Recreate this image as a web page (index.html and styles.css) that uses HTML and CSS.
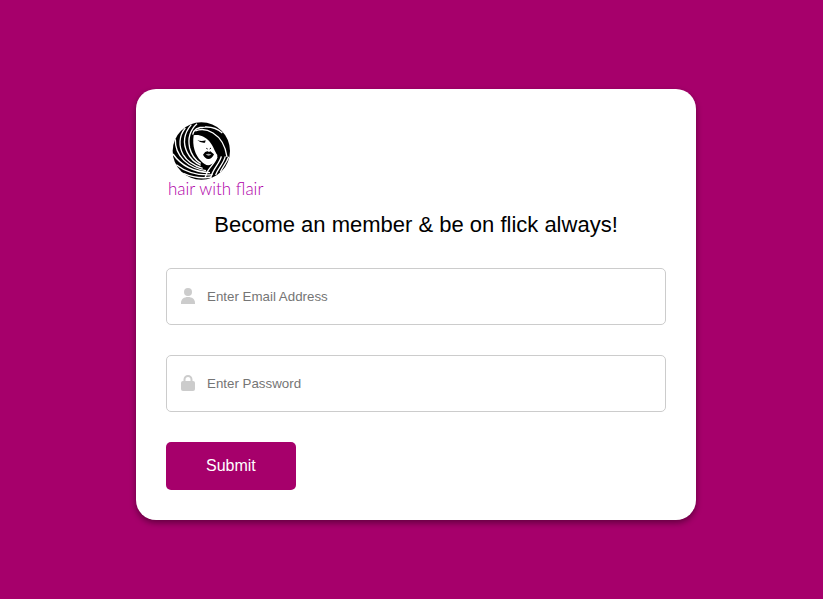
FILE: index.html
```html
<!DOCTYPE html>
<html lang="en">
<head>
<meta charset="utf-8">
<meta name="viewport" content="width=device-width, initial-scale=1">
<title>Hair with Flair</title>
<link rel="stylesheet" href="styles.css">
</head>
<body>
<main class="card">
  <div class="logo">
    <svg class="logo-mark" viewBox="0 0 174 174" aria-hidden="true">
      <circle cx="88" cy="87" r="86" fill="#000"/>
      <path class="face" d="M65 40C80 36 101 44 112 58C125 74 127 87 136 99C135 113 127 123 118 127C107 134 97 127 87 117C70 100 60 73 65 40Z"/>
      <g class="strands">
        <path d="M58 8C36 34 32 64 46 92C54 108 66 121 86 130"/>
        <path d="M75 5C54 24 47 50 53 78C58 98 68 113 86 124"/>
        <path d="M40 18C20 42 20 73 33 97C45 117 65 131 92 139"/>
        <path d="M10 52C8 103 50 138 102 146"/>
        <path d="M3 96C28 132 66 150 114 152"/>
        <path d="M13 128C45 153 82 161 122 158"/>
        <path d="M34 154C61 166 91 170 119 165"/>
        <path d="M62 38C65 22 78 15 99 15C120 14 138 21 151 33"/>
        <path d="M70 27C88 19 107 23 123 33C146 47 160 69 165 105"/>
        <path d="M135 104C131 120 116 133 108 146C104 154 101 161 99 168"/>
        <path d="M148 103C143 124 124 139 116 166"/>
        <path d="M160 103C154 126 138 138 131 159"/>
        <path d="M170 104C163 125 150 136 145 151"/>
      </g>
      <path d="M76 54Q88 60 101 55L99 62Q86 64 76 54Z"/>
      <path d="M103 79L107 81M113 81L117 78" fill="none" stroke="#000" stroke-width="3"/>
      <path d="M93 98Q100 87 107 88L111 90L115 88L126 97Q120 111 109 111Q99 110 93 98Z"/>
      <path d="M101 97Q110 93 118 97Q110 105 101 97Z" fill="#aaa"/>
    </svg>
    <span class="logo-name">hair with flair</span>
  </div>
  <h1 class="title">Become an member &amp; be on flick always!</h1>
  <form class="form">
    <div class="field">
      <label class="field-icon" for="email" aria-label="Email address">
        <svg viewBox="0 0 16 18" aria-hidden="true"><circle cx="8" cy="4" r="4"/><path d="M1 16v-1c0-4 3-6 7-6s7 2 7 6v1Z"/></svg>
      </label>
      <input id="email" type="email" placeholder="Enter Email Address">
    </div>
    <div class="field">
      <label class="field-icon" for="password" aria-label="Password">
        <svg viewBox="0 0 16 18" aria-hidden="true"><path d="M4.5 7V4.5a3.5 3.5 0 0 1 7 0V7" fill="none" stroke="#ccc" stroke-width="2"/><rect x="1" y="6" width="14" height="10" rx="2"/></svg>
      </label>
      <input id="password" type="password" placeholder="Enter Password">
    </div>
    <button class="submit" type="submit">Submit</button>
  </form>
</main>
</body>
</html>
```
FILE: styles.css
```css
* {
  box-sizing: border-box;
}

body {
  margin: 0;
  padding: 10px 0 0 9px;
  min-height: 100vh;
  display: flex;
  align-items: center;
  justify-content: center;
  background: #a6006b;
  font-family: "Liberation Sans", Arial, sans-serif;
}

.card {
  width: 100%;
  max-width: 560px;
  padding: 30px;
  border-radius: 20px;
  background: #fff;
  box-shadow: 0 3px 6px rgba(0, 0, 0, 0.4);
}

.logo {
  display: flex;
  flex-direction: column;
  align-items: flex-start;
  padding: 3px 0 0 2px;
}

.logo-mark {
  display: block;
  width: 58px;
  height: 58px;
  margin-left: 4px;
}

.face {
  fill: #fff;
}

.strands {
  fill: none;
  stroke: #fff;
  stroke-width: 4;
}

.logo-name {
  color: #b000a8;
  font: 300 17px/18px Lato, sans-serif;
}

.title {
  margin: 13px 0 30px;
  font-size: 22px;
  font-weight: 400;
  line-height: 27px;
  text-align: center;
}

.form {
  display: flex;
  flex-direction: column;
  align-items: flex-start;
  gap: 30px;
}

.field {
  display: flex;
  align-items: center;
  width: 100%;
  height: 57px;
  padding: 0 14px;
  gap: 11px;
  border: 1px solid #ccc;
  border-radius: 5px;
}

.field-icon svg {
  display: block;
  width: 16px;
  height: 18px;
  margin-left: -1px;
  fill: #ccc;
}

.field input {
  flex: 1;
  min-width: 0;
  padding: 0;
  border: 0;
  outline: 0;
  background: none;
  font-family: "Liberation Sans", Arial, sans-serif;
  line-height: 20px;
}

.field input::placeholder {
  color: #757575;
}

.submit {
  height: 48px;
  padding: 0 40px;
  border: 0;
  border-radius: 5px;
  background: #a6006b;
  color: #fff;
  font: 16px "Liberation Sans", Arial, sans-serif;
  cursor: pointer;
}
```
